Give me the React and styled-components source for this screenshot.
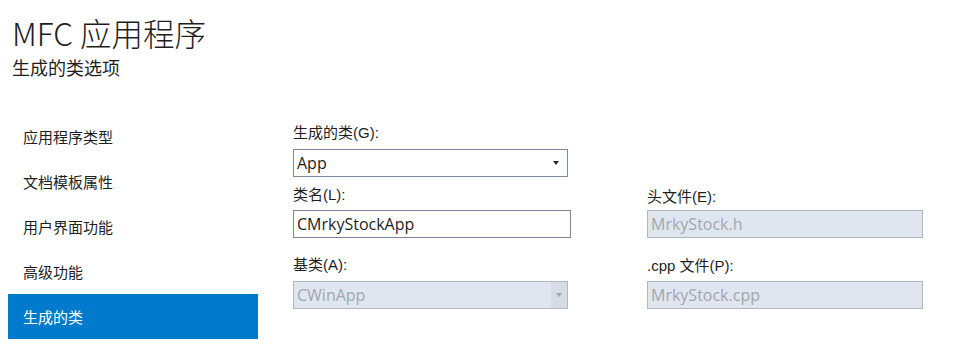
import React from "react";
import styled, { createGlobalStyle } from "styled-components";

const Global = createGlobalStyle`
  html, body { margin: 0; padding: 0; background: #ffffff; }
  body {
    font-family: "Open Sans", "Noto Sans CJK SC", sans-serif;
    color: #1e1e1e;
  }
`;

const Page = styled.div`
  width: 953px;
  height: 363px;
  background: #fff;
  overflow: hidden;
`;

const Header = styled.header`
  padding: 13px 0 0 12px;
  height: 78px;
  box-sizing: border-box;
`;

const Title = styled.h1`
  margin: 0;
  font-size: 31.5px;
  line-height: 38px;
  font-weight: 300;
  color: #1e1e1e;
  font-family: "Noto Sans CJK SC", sans-serif;
`;

const Subtitle = styled.div`
  font-size: 18px;
  line-height: 22px;
  margin-top: 5px;
  color: #1e1e1e;
  font-family: "Noto Sans CJK SC", sans-serif;
`;

const Body = styled.div`
  display: flex;
  margin-top: 36px;
  padding-left: 8px;
`;

const Nav = styled.nav`
  width: 250px;
  display: flex;
  flex-direction: column;
`;

const NavItem = styled.div`
  height: 45px;
  display: flex;
  align-items: center;
  padding-left: 15px;
  font-size: 15px;
  font-family: "Noto Sans CJK SC", sans-serif;
  color: ${(p) => (p.$active ? "#ffffff" : "#1e1e1e")};
  background: ${(p) => (p.$active ? "#007acc" : "transparent")};
`;

const Form = styled.div`
  margin-left: 35px;
  padding-top: 9px;
  display: grid;
  grid-template-columns: 278px 276px;
  column-gap: 76px;
  grid-template-rows: 20px 34px 33px 28px 43px 28px;
  align-items: end;
`;

const Label = styled.label`
  display: block;
  font-size: 15px;
  line-height: 20px;
  margin-bottom: ${(p) => p.$mb || 0}px;
  color: #1e1e1e;
  font-family: "Liberation Sans", "Noto Sans CJK SC", sans-serif;
  grid-column: ${(p) => p.$col};
  grid-row: ${(p) => p.$row};
`;

const Box = styled.div`
  box-sizing: border-box;
  height: 28px;
  width: ${(p) => p.$w}px;
  grid-column: ${(p) => p.$col};
  grid-row: ${(p) => p.$row};
  display: flex;
  align-items: center;
  border: 1px solid ${(p) => (p.$disabled ? "#b0b8c4" : "#7b8aa2")};
  background: ${(p) => (p.$disabled ? "#e0e6f0" : "#ffffff")};
  color: ${(p) => (p.$disabled ? "#a2a6ac" : "#1e1e1e")};
  font-size: 16px;
  font-family: "Open Sans", sans-serif;
`;

const BoxText = styled.span`
  flex: 1;
  padding-left: 3px;
  white-space: nowrap;
`;

const ArrowZone = styled.span`
  width: 16px;
  align-self: stretch;
  display: flex;
  align-items: center;
  justify-content: center;
  background: ${(p) => (p.$disabled ? "#d6dbe5" : "transparent")};
  margin-right: ${(p) => (p.$disabled ? 0 : 3)}px;
`;

const Arrow = styled.span`
  width: 0;
  height: 0;
  border-left: 3.5px solid transparent;
  border-right: 3.5px solid transparent;
  border-top: 4px solid ${(p) => (p.$disabled ? "#a0a4aa" : "#1e2a3c")};
`;

function Combo({ value, disabled, col, row }) {
  return (
    <Box $w={275} $col={col} $row={row} $disabled={disabled}>
      <BoxText>{value}</BoxText>
      <ArrowZone $disabled={disabled}>
        <Arrow $disabled={disabled} />
      </ArrowZone>
    </Box>
  );
}

const navItems = ["应用程序类型", "文档模板属性", "用户界面功能", "高级功能", "生成的类"];

export default function App() {
  return (
    <Page>
      <Global />
      <Header>
        <Title>MFC 应用程序</Title>
        <Subtitle>生成的类选项</Subtitle>
      </Header>
      <Body>
        <Nav>
          {navItems.map((t) => (
            <NavItem key={t} $active={t === "生成的类"}>
              {t}
            </NavItem>
          ))}
        </Nav>
        <Form>
          <Label $col={1} $row={1}>生成的类(G):</Label>
          <Combo value="App" col={1} row={2} />

          <Label $col={1} $row={3} $mb={5}>类名(L):</Label>
          <Box $w={278} $col={1} $row={4}>
            <BoxText>CMrkyStockApp</BoxText>
          </Box>
          <Label $col={2} $row={3} $mb={3}>头文件(E):</Label>
          <Box $w={276} $col={2} $row={4} $disabled>
            <BoxText>MrkyStock.h</BoxText>
          </Box>

          <Label $col={1} $row={5} $mb={6}>基类(A):</Label>
          <Combo value="CWinApp" disabled col={1} row={6} />
          <Label $col={2} $row={5} $mb={5}>.cpp 文件(P):</Label>
          <Box $w={276} $col={2} $row={6} $disabled>
            <BoxText>MrkyStock.cpp</BoxText>
          </Box>
        </Form>
      </Body>
    </Page>
  );
}
